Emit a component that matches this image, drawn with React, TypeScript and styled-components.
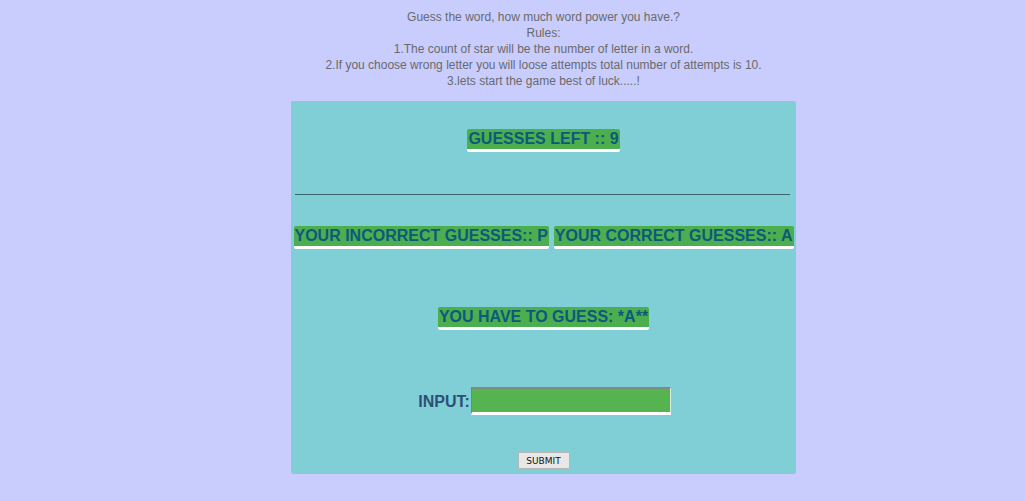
import React from 'react';
import styled, { createGlobalStyle } from 'styled-components';

const GlobalStyle = createGlobalStyle`
  body {
    margin: 8px;
    background: #c8cdfe;
    font-family: "Liberation Sans", Arial, sans-serif;
  }
`;

const Page = styled.div`
  width: 505px;
  margin-left: 283px;
  display: flex;
  flex-direction: column;
  align-items: center;
`;

const Rules = styled.div`
  margin-top: 1px;
  font-size: 12px;
  line-height: 16px;
  color: #6a6a6a;
  text-align: center;
  white-space: nowrap;
`;

const Panel = styled.div`
  box-sizing: border-box;
  width: 505px;
  height: 373px;
  margin-top: 12px;
  padding: 28px 4px 0;
  background: #80cfd7;
  border-radius: 2px;
  display: flex;
  flex-direction: column;
  align-items: center;
`;

const Tag = styled.span<{ $gapAfter?: number }>`
  display: inline-block;
  background: #4cae4f;
  color: #0b5a7c;
  font-weight: bold;
  font-size: 16px;
  line-height: 20px;
  padding: 0 1px;
  border-bottom: 3px solid #ffffff;
  border-radius: 2px;
  white-space: nowrap;
  margin-bottom: ${(p) => p.$gapAfter ?? 0}px;
`;

const Divider = styled.hr`
  align-self: stretch;
  margin: 0 2px 31px 0;
  border: none;
  border-top: 1px solid #3b6468;
  height: 0;
`;

const Row = styled.div`
  display: flex;
  gap: 5px;
  justify-content: center;
  margin-bottom: 58px;
`;

const InputRow = styled.div`
  display: flex;
  align-items: center;
  margin-top: 57px;
  margin-bottom: 37px;
  padding-left: 2px;
`;

const InputLabel = styled.label`
  font-weight: bold;
  font-size: 16px;
  color: #2d4f74;
  margin-top: 2px;
`;

const GuessInput = styled.input`
  box-sizing: border-box;
  width: 200px;
  height: 28px;
  margin: 0 0 0 1px;
  padding: 0 2px;
  background: #55b450;
  border: none;
  border-top: 2px solid #7f8c80;
  border-left: 1px solid #6a8f6a;
  border-right: 1px solid #dfe9df;
  border-bottom: 3px solid #ffffff;
  outline: none;
  caret-color: #1b2b3b;
  font-size: 16px;
`;

const SubmitButton = styled.button`
  width: 52px;
  height: 17px;
  padding: 0;
  font-family: "DejaVu Sans", Tahoma, sans-serif;
  font-size: 9px;
  color: #111;
  background: #e8e8e8;
  border: 1px solid #b5b5b5;
  border-radius: 1px;
`;

export default function App() {
  return (
    <>
      <GlobalStyle />
      <Page>
        <Rules>
          Guess the word, how much word power you have.?
          <br />
          Rules:
          <br />
          1.The count of star will be the number of letter in a word.
          <br />
          2.If you choose wrong letter you will loose attempts total number of attempts is 10.
          <br />
          3.lets start the game best of luck.....!
        </Rules>
        <Panel>
          <Tag $gapAfter={42}>GUESSES LEFT :: 9</Tag>
          <Divider />
          <Row>
            <Tag>YOUR INCORRECT GUESSES:: P</Tag>
            <Tag>YOUR CORRECT GUESSES:: A</Tag>
          </Row>
          <Tag>YOU HAVE TO GUESS: *A**</Tag>
          <InputRow>
            <InputLabel>INPUT:</InputLabel>
            <GuessInput type="text" autoFocus />
          </InputRow>
          <SubmitButton>SUBMIT</SubmitButton>
        </Panel>
      </Page>
    </>
  );
}
